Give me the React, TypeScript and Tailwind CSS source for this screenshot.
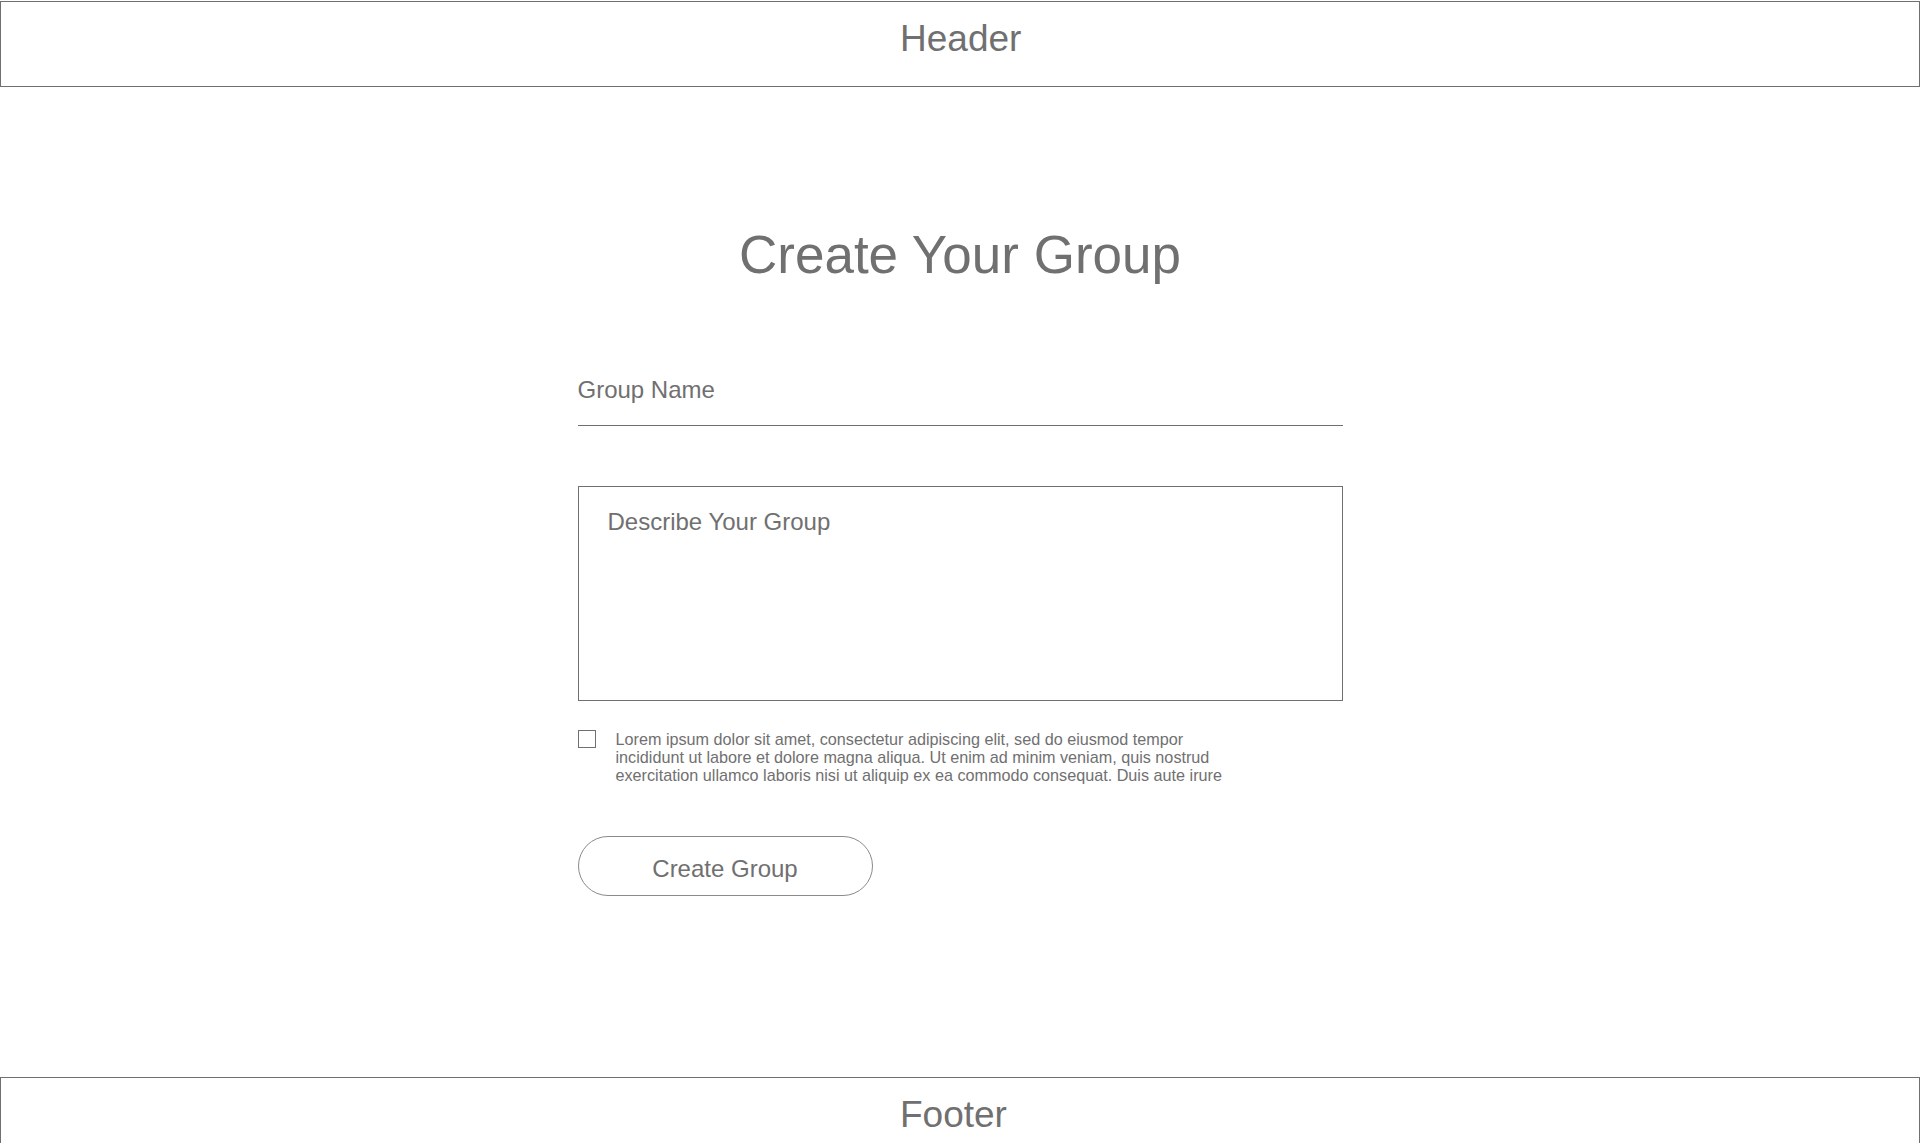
import React from "react";

const font = "font-['Liberation_Sans',Arial,Helvetica,sans-serif]";

export default function App() {
  return (
    <div className={`${font} h-[1143px] w-full overflow-hidden bg-white text-[#707070] flex flex-col`}>
      <header className="mt-px h-[86px] flex-none border border-[#707070] flex justify-center">
        <div className="w-[120px] pt-[18px] text-[37px] leading-[37px]">Header</div>
      </header>

      <main className="flex-none h-[990px] flex flex-col items-center pt-[141px]">
        <h1 className="text-[53px] leading-[53px] font-normal">Create Your Group</h1>

        <div className="w-[765px] mt-[97px] flex flex-col">
          <div className="border-b border-[#707070] pb-[23px] text-[24px] leading-[24px]">Group Name</div>

          <div className="mt-[60px] h-[215px] border border-[#707070] pl-[29px] pt-[23px] text-[24px] leading-[24px]">
            Describe Your Group
          </div>

          <div className="mt-[29px] flex items-start">
            <div className="w-[18px] h-[18px] flex-none border border-[#707070]"></div>
            <div className="ml-[20px] text-[16.2px] leading-[18px] whitespace-nowrap">
              <span className="block">Lorem ipsum dolor sit amet, consectetur adipiscing elit, sed do eiusmod tempor</span>
              <span className="block">incididunt ut labore et dolore magna aliqua. Ut enim ad minim veniam, quis nostrud</span>
              <span className="block">exercitation ullamco laboris nisi ut aliquip ex ea commodo consequat. Duis aute irure</span>
            </div>
          </div>

          <button className="mt-[52px] w-[295px] h-[60px] rounded-full border border-[#8a8a8a] pt-[6px] text-[24px] leading-[24px] text-[#707070] flex items-center justify-center">
            Create Group
          </button>
        </div>
      </main>

      <footer className="h-[86px] flex-none border border-[#707070] flex justify-center">
        <div className="w-[120px] pt-[18px] text-[37px] leading-[37px]">Footer</div>
      </footer>
    </div>
  );
}
